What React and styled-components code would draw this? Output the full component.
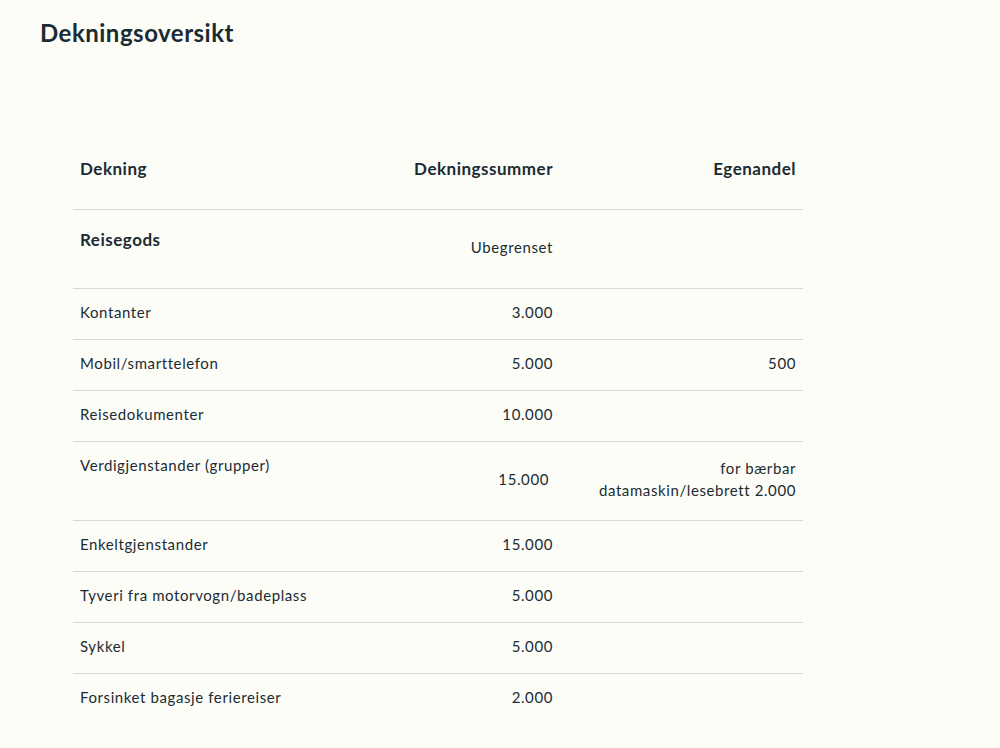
import React from "react";
import styled, { createGlobalStyle } from "styled-components";

const Global = createGlobalStyle`
  html, body { margin: 0; padding: 0; background: #fdfdf8; }
  body { font-family: Lato, "Open Sans", sans-serif; color: #1b2b33; }
`;

const Page = styled.div`
  padding: 18px 40px 0 40px;
  min-height: 748px;
  box-sizing: border-box;
`;

const Title = styled.h1`
  margin: 0;
  font-size: 24px;
  line-height: 30px;
  font-weight: 700;
  letter-spacing: 0.5px;
`;

const Table = styled.div`
  margin: 81px 0 0 33px;
  width: 730px;
`;

const Row = styled.div`
  display: grid;
  grid-template-columns: 257px 230px 243px;
  height: ${(p) => p.$h}px;
  border-bottom: ${(p) => (p.$last ? "none" : "1px solid #d8d8d6")};
`;

const Cell = styled.div`
  padding: ${(p) =>
    p.$top != null ? `${p.$top}px 7px 0` : p.$head ? "0 7px" : "0 7px 4px"};
  padding-right: ${(p) => 7 + (p.$shift || 0)}px;
  align-self: ${(p) => (p.$top != null ? "start" : "center")};
  text-align: ${(p) => (p.$right ? "right" : "left")};
  font-size: ${(p) => (p.$head ? 17 : 15)}px;
  font-weight: ${(p) => (p.$bold ? 700 : 400)};
  letter-spacing: ${(p) => (p.$head ? 0.5 : 0.6)}px;
  line-height: 22px;
`;

const rows = [
  { label: "Kontanter", sum: "3.000" },
  { label: "Mobil/smarttelefon", sum: "5.000", own: "500" },
  { label: "Reisedokumenter", sum: "10.000" },
  {
    label: "Verdigjenstander (grupper)",
    sum: "15.000",
    own: ["for bærbar", "datamaskin/lesebrett 2.000"],
    tall: true,
    top: 12,
    shift: 4,
  },
  { label: "Enkeltgjenstander", sum: "15.000" },
  { label: "Tyveri fra motorvogn/badeplass", sum: "5.000" },
  { label: "Sykkel", sum: "5.000" },
  { label: "Forsinket bagasje feriereiser", sum: "2.000" },
];

export default function App() {
  return (
    <>
      <Global />
      <Page>
        <Title>Dekningsoversikt</Title>
        <Table>
          <Row $h={80}>
            <Cell $bold $head>Dekning</Cell>
            <Cell $bold $head $right>Dekningssummer</Cell>
            <Cell $bold $head $right>Egenandel</Cell>
          </Row>
          <Row $h={78}>
            <Cell $bold $head $top={19}>Reisegods</Cell>
            <Cell $right>Ubegrenset</Cell>
            <Cell $right />
          </Row>
          {rows.map((r, i) => (
            <Row key={r.label} $h={r.tall ? 78 : 50} $last={i === rows.length - 1}>
              <Cell $top={r.top}>{r.label}</Cell>
              <Cell $right $shift={r.shift}>{r.sum}</Cell>
              <Cell $right>
                {Array.isArray(r.own)
                  ? r.own.map((t) => <div key={t}>{t}</div>)
                  : r.own}
              </Cell>
            </Row>
          ))}
        </Table>
      </Page>
    </>
  );
}
